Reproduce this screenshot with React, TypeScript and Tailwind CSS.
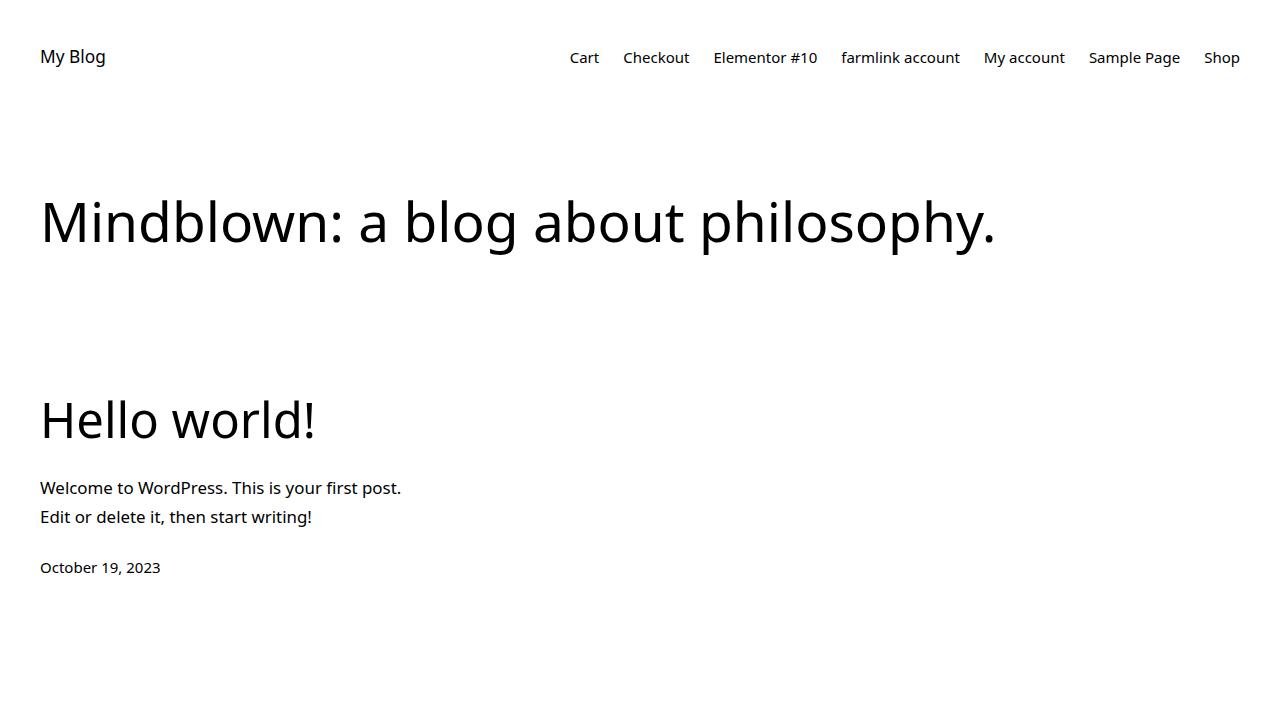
export default function App() {
  const nav = ["Cart", "Checkout", "Elementor #10", "farmlink account", "My account", "Sample Page", "Shop"];
  return (
    <div className="min-h-[720px] bg-white text-black" style={{ fontFamily: '"Noto Sans", sans-serif' }}>
      <header className="flex items-center justify-between px-10 pt-[45px]">
        <div className="text-[17.3px] leading-[24px]">My Blog</div>
        <nav className="flex gap-6 text-[15px] leading-[24px]">
          {nav.map((n) => (
            <span key={n}>{n}</span>
          ))}
        </nav>
      </header>
      <main className="px-10">
        <h1 className="mt-[116px] text-[55px] leading-[72px] font-normal">Mindblown: a blog about philosophy.</h1>
        <h2 className="mt-[130px] text-[49px] leading-[64px] font-normal">Hello world!</h2>
        <p className="mt-[22px] text-[16.9px] leading-[29px]">
          Welcome to WordPress. This is your first post.
          <br />
          Edit or delete it, then start writing!
        </p>
        <div className="mt-[24px] text-[15px] leading-[24px]">October 19, 2023</div>
      </main>
    </div>
  );
}
